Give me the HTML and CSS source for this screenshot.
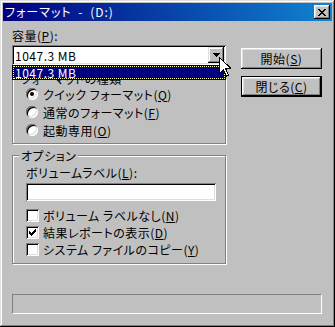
FILE: index.html
```html
<!DOCTYPE html>
<html lang="ja">
<head>
  <meta charset="UTF-8" />
  <meta name="viewport" content="width=device-width, initial-scale=1.0" />
  <title>フォーマット - (D:)</title>
  <link rel="stylesheet" href="styles.css">
</head>
<body>
  <div class="window">
    <div class="titlebar">
      <span class="title">フォーマット - (D:)</span>
      <button class="close">
        <svg width="8" height="7" viewBox="0 0 8 7" shape-rendering="crispEdges">
          <path d="M0 0h2v1h1v1h2v-1h1v-1h2v1h-1v1h-1v1h-1v1h1v1h1v1h1v1h-2v-1h-1v-1h-2v1h-1v1h-2v-1h1v-1h1v-1h1v-1h-1v-1h-1v-1h-1z" fill="#000"/>
        </svg>
      </button>
    </div>

    <div class="content">
      <div class="main">
        <div class="left">
          <div class="label">容量(<u>P</u>):</div>
          <div class="combo">
            <span class="combo-value">1047.3 MB</span>
            <span class="combo-btn">
              <svg width="7" height="4" viewBox="0 0 7 4" shape-rendering="crispEdges"><path d="M0 0h7v1h-1v1h-1v1h-1v1h-1v-1h-1v-1h-1v-1h-1z" fill="#000"/></svg>
            </span>
            <div class="combo-list">
              <div class="combo-item">1047.3 MB</div>
            </div>
          </div>

          <fieldset class="group group-type">
            <legend>フォーマットの種類</legend>
            <div class="row"><span class="radio checked"></span>クイック フォーマット(<u>Q</u>)</div>
            <div class="row"><span class="radio"></span>通常のフォーマット(<u>F</u>)</div>
            <div class="row"><span class="radio"></span>起動専用(<u>O</u>)</div>
          </fieldset>

          <fieldset class="group group-opts">
            <legend>オプション</legend>
            <div class="label label-vol">ボリュームラベル(<u>L</u>):</div>
            <div class="textbox"></div>
            <div class="checks">
              <div class="row row-check"><span class="check"></span>ボリューム ラベルなし(<u>N</u>)</div>
              <div class="row row-check"><span class="check"><svg width="7" height="7" viewBox="0 0 7 7" shape-rendering="crispEdges"><path d="M6 0h1v3h-1v1h-1v1h-1v1h-1v1h-1v-1h-1v-1h-1v-3h1v1h1v1h1v-1h1v-1h1z" fill="#000"/></svg></span>結果レポートの表示(<u>D</u>)</div>
              <div class="row row-check"><span class="check"></span>システム ファイルのコピー(<u>Y</u>)</div>
            </div>
          </fieldset>
        </div>

        <div class="right">
          <button class="btn">開始(<u>S</u>)</button>
          <button class="btn btn-default">閉じる(<u>C</u>)</button>
        </div>
      </div>

      <div class="progress"></div>
    </div>

    <svg class="cursor" width="12" height="20" viewBox="0 0 12 20" shape-rendering="crispEdges">
      <path d="M0.5 0.5v16l4-4 3 6.5 2-1-3-6.5h5.5z" fill="#fff" stroke="#000" stroke-width="1"/>
    </svg>
  </div>
</body>
</html>
```

FILE: styles.css
```css
body {
  margin: 0;
  font-family: "Noto Sans CJK JP", "Liberation Sans", sans-serif;
  font-size: 12px;
  line-height: 13px;
  letter-spacing: 0.5px;
  font-feature-settings: "palt";
  color: #000;
  background: #c0c0c0;
}
u {
  text-decoration-thickness: 1px;
  text-underline-offset: 1px;
}
.window {
  position: relative;
  width: 335px;
  height: 327px;
  box-sizing: border-box;
  padding: 3px;
  background: #c0c0c0;
  box-shadow: inset -1px -1px 0 #000, inset 1px 1px 0 #dfdfdf,
              inset -2px -2px 0 #808080, inset 2px 2px 0 #fff;
}
.titlebar {
  display: flex;
  align-items: center;
  justify-content: space-between;
  height: 18px;
  padding: 0 2px;
  background: linear-gradient(to right, #000080, #1084d0);
  color: #fff;
}
.title {
  line-height: 18px;
  letter-spacing: 1px;
  word-spacing: 3px;
}
.close {
  display: flex;
  align-items: center;
  justify-content: center;
  width: 16px;
  height: 14px;
  padding: 0;
  border: none;
  background: #c0c0c0;
  box-shadow: inset -1px -1px 0 #000, inset 1px 1px 0 #fff,
              inset -2px -2px 0 #808080, inset 2px 2px 0 #dfdfdf;
}
.content {
  padding: 8px 10px 0 9px;
}
.main {
  display: flex;
  gap: 15px;
}
.left {
  width: 214px;
}
.right {
  display: flex;
  flex-direction: column;
  width: 81px;
  padding-top: 19px;
  gap: 7px;
}
.combo {
  position: relative;
  display: flex;
  align-items: center;
  justify-content: space-between;
  height: 20px;
  margin-top: 3px;
  box-sizing: border-box;
  padding: 2px;
  background: #fff;
  box-shadow: inset 1px 1px 0 #808080, inset -1px -1px 0 #fff,
              inset 2px 2px 0 #000, inset -2px -2px 0 #dfdfdf;
}
.combo-value {
  padding-left: 1px;
}
.combo-btn {
  display: flex;
  align-items: center;
  justify-content: center;
  width: 16px;
  height: 16px;
  background: #c0c0c0;
  box-shadow: inset -1px -1px 0 #000, inset 1px 1px 0 #dfdfdf,
              inset -2px -2px 0 #808080, inset 2px 2px 0 #fff;
}
.combo-list {
  position: absolute;
  top: 100%;
  left: 0;
  right: 0;
  height: 15px;
  box-sizing: border-box;
  border: 1px solid #000;
  background: #fff;
  z-index: 2;
}
.combo-item {
  height: 13px;
  box-sizing: border-box;
  border: 1px dotted #ffffa0;
  background: #000080;
  color: #fff;
  line-height: 11px;
  padding-left: 1px;
}
.group {
  margin: 0;
  padding: 0 8px 4px 13px;
  border: 1px solid #808080;
  box-shadow: inset 1px 1px 0 #fff, 1px 1px 0 #fff;
}
.group legend {
  margin-left: -7px;
  padding: 0 2px;
  background: #c0c0c0;
  line-height: 13px;
}
.group-type {
  margin-top: 7px;
}
.group-opts {
  margin-top: 5px;
  padding-bottom: 5px;
}
.row {
  display: flex;
  align-items: center;
  height: 18px;
  white-space: nowrap;
}
.row-check {
  height: 17px;
}
.radio {
  position: relative;
  width: 12px;
  height: 12px;
  margin-right: 5px;
  border-radius: 50%;
  background: #fff;
  box-shadow: inset 1px 1px 0 #808080, inset -1px -1px 0 #fff,
              inset 2px 2px 0 #000, inset -2px -2px 0 #dfdfdf;
}
.radio.checked::after {
  content: "";
  position: absolute;
  top: 4px;
  left: 4px;
  width: 4px;
  height: 4px;
  border-radius: 50%;
  background: #000;
}
.check {
  display: flex;
  align-items: center;
  justify-content: center;
  width: 13px;
  height: 13px;
  margin-right: 4px;
  background: #fff;
  box-shadow: inset 1px 1px 0 #808080, inset -1px -1px 0 #fff,
              inset 2px 2px 0 #000, inset -2px -2px 0 #dfdfdf;
}
.label-vol {
  margin-top: 4px;
}
.textbox {
  width: 190px;
  height: 18px;
  margin-top: 4px;
  background: #fff;
  box-shadow: inset 1px 1px 0 #808080, inset -1px -1px 0 #fff,
              inset 2px 2px 0 #000, inset -2px -2px 0 #dfdfdf;
}
.checks {
  margin-top: 6px;
}
.btn {
  height: 21px;
  padding: 0;
  border: none;
  font: inherit;
  letter-spacing: inherit;
  font-feature-settings: "palt";
  color: #000;
  background: #c0c0c0;
  box-shadow: inset -1px -1px 0 #000, inset 1px 1px 0 #fff,
              inset -2px -2px 0 #808080, inset 2px 2px 0 #dfdfdf;
}
.btn-default {
  box-shadow: inset 0 0 0 1px #000, inset -2px -2px 0 #000, inset 2px 2px 0 #fff,
              inset -3px -3px 0 #808080, inset 3px 3px 0 #dfdfdf;
}
.progress {
  height: 20px;
  margin-top: 30px;
  box-sizing: border-box;
  border: 1px solid;
  border-color: #808080 #fff #fff #808080;
}
.cursor {
  position: absolute;
  left: 219px;
  top: 57px;
  z-index: 3;
}
```
